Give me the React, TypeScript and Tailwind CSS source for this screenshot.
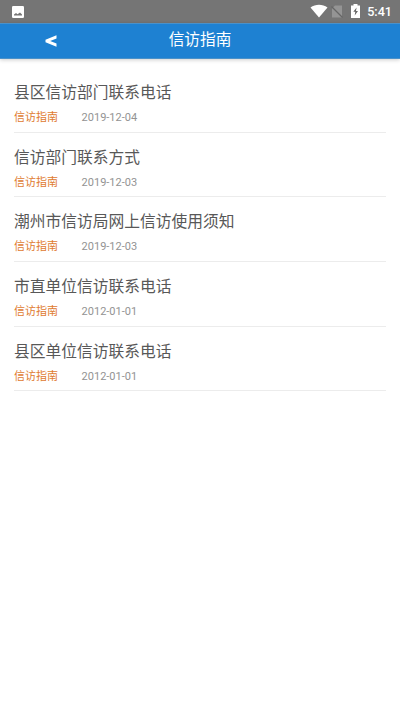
type Article = { title: string; category: string; date: string };

const articles: Article[] = [
  { title: "县区信访部门联系电话", category: "信访指南", date: "2019-12-04" },
  { title: "信访部门联系方式", category: "信访指南", date: "2019-12-03" },
  { title: "潮州市信访局网上信访使用须知", category: "信访指南", date: "2019-12-03" },
  { title: "市直单位信访联系电话", category: "信访指南", date: "2012-01-01" },
  { title: "县区单位信访联系电话", category: "信访指南", date: "2012-01-01" },
];

export default function App() {
  return (
    <div className="min-h-screen bg-white font-['Roboto','Noto_Sans_CJK_SC',sans-serif]">
      <StatusBar />
      <Header title="信访指南" />
      <ul className="px-3.5 pt-[9px]">
        {articles.map((a) => (
          <ArticleRow key={a.title} article={a} />
        ))}
      </ul>
    </div>
  );
}

function StatusBar() {
  return (
    <div className="flex h-[23px] items-center bg-[#757575] pl-3 pr-2 text-white">
      <svg viewBox="0 0 12 12" className="h-3 w-3">
        <rect width="12" height="12" rx="1.2" fill="#fff" />
        <path d="M2 9.6V8.5L4 7l1.5 1.3L8 6.500l2 2v1.100z" fill="#757575" />
      </svg>
      <div className="ml-auto flex items-center">
        <svg viewBox="0 0 18 14" className="mb-px h-3.5 w-[18px]">
          <path d="M.5 3.500C5.500-.2 12.500-.2 17.500 3.500L9 13.500z" fill="#fff" />
        </svg>
        <svg viewBox="0 0 12 13" className="ml-[3px] h-[13px] w-3">
          <path d="M4 .5h7V12.500H1V3.500z" fill="#949494" />
          <path d="M.5 1.500L11.500 12.500" stroke="#666" strokeWidth="1.300" />
        </svg>
        <svg viewBox="0 0 9 14" className="mb-px ml-2 h-3.5 w-[9px]">
          <path d="M0 1.500h2.500V0h4v1.500H9V14H0z" fill="#fff" />
          <path d="M5.600 3.500L2.300 7.800h2l-.6 3.700L7 7H5z" fill="#666" />
        </svg>
        <span className="ml-[7px] pt-px text-[12.6px] leading-none font-medium">5:41</span>
      </div>
    </div>
  );
}

function Header({ title }: { title: string }) {
  return (
    <header className="grid h-9 grid-cols-[102px_1fr_102px] items-center border-y border-[#4a91c9] bg-[#1e81d2] text-white shadow-[0_1px_4px_rgba(0,0,0,0.2)]">
      <button aria-label="返回" className="flex justify-center">
        <svg viewBox="0 0 12 12" className="h-3 w-3">
          <path d="M11.500 .3v3.200L5.200 6l6.300 2.500v3.200L.5 7.200V4.800z" fill="#fff" />
        </svg>
      </button>
      <h1 className="pb-0.5 text-center text-[15.7px] leading-none">{title}</h1>
    </header>
  );
}

function ArticleRow({ article }: { article: Article }) {
  return (
    <li className="h-[64.7px] border-b border-[#ececec] pt-[13px]">
      <div className="text-[15.75px] leading-6 text-[#585858]">{article.title}</div>
      <div className="flex gap-[23.6px] text-[11px] leading-[26.6px]">
        <span className="text-[#e07b30]">{article.category}</span>
        <span className="text-[#939393]">{article.date}</span>
      </div>
    </li>
  );
}
